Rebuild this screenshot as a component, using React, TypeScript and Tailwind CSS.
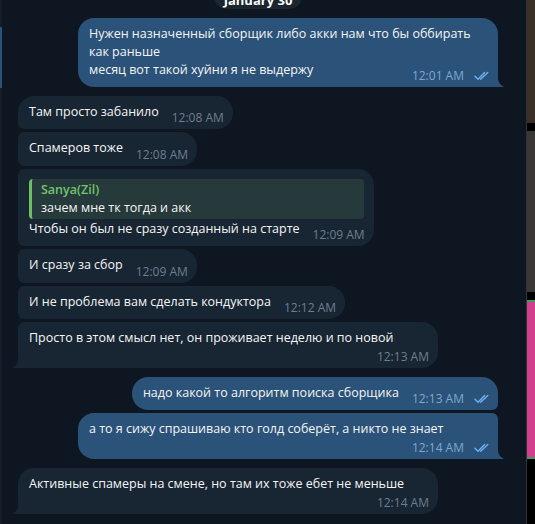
import React from "react";

type Corner = string;

function Checks() {
  return (
    <svg className="ml-[10px]" width="16" height="10" viewBox="0 0 16 10" fill="none">
      <path d="M1 5.2L4 8.2L10.6 1.6" stroke="#6db3f2" strokeWidth="1.4" strokeLinecap="round" strokeLinejoin="round" />
      <path d="M6.6 8.2L13.8 1.6" stroke="#6db3f2" strokeWidth="1.4" strokeLinecap="round" strokeLinejoin="round" />
    </svg>
  );
}

function Meta({ out, time }: { out?: boolean; time: string }) {
  return (
    <div className={`flex h-[16px] items-center whitespace-nowrap text-[12px] leading-[16px] ${out ? "text-[#7da8d3]" : "text-[#6d7f8f]"}`}>
      <span>{time}</span>
      {out && <Checks />}
    </div>
  );
}

function InTail() {
  return (
    <svg className="absolute bottom-0 left-[-6px]" width="8" height="14" viewBox="0 0 8 14">
      <path d="M8 0 L6.5 0 C6.5 8 4.5 12 0.5 13.4 C0.1 13.6 0.2 14 0.6 14 L8 14 Z" fill="#182533" />
    </svg>
  );
}

function OutTail() {
  return (
    <svg className="absolute bottom-0 right-[-6px]" width="8" height="14" viewBox="0 0 8 14">
      <path d="M0 0 L1.5 0 C1.5 8 3.5 12 7.5 13.4 C7.9 13.6 7.8 14 7.4 14 L0 14 Z" fill="#2b5278" />
    </svg>
  );
}

function Bubble({
  out,
  lines,
  time,
  wrapTime,
  wide,
  corners,
  tail,
  reply,
  mt,
}: {
  out?: boolean;
  lines: string[];
  time: string;
  wrapTime?: boolean;
  wide?: boolean;
  corners: Corner;
  tail?: boolean;
  reply?: { name: string; text: string };
  mt: string;
}) {
  const last = lines[lines.length - 1];
  return (
    <div className={`flex ${out ? "justify-end" : "justify-start"} ${mt}`}>
      <div
        className={`relative flex flex-col pl-[11px] pt-[7px] pb-[3px] ${out ? "bg-[#2b5278] pr-[8px]" : "bg-[#182533] pr-[9px]"} ${wide ? "w-[420px]" : ""} ${corners}`}
      >
        {reply && (
          <div className="mt-[3px] mb-[1px] mr-[1px] flex h-[40px] flex-col justify-center rounded-[4px] border-l-[3px] border-[#6cbf66] bg-[#263a3b] pl-[9px]">
            <div className="font-semibold leading-[18px] text-[#72c46c]">{reply.name}</div>
            <div className="leading-[18px]">{reply.text}</div>
          </div>
        )}
        {lines.slice(0, -1).map((l, i) => (
          <div key={i} className="whitespace-nowrap leading-[18px]">
            {l}
          </div>
        ))}
        {wrapTime ? (
          <>
            <div className="whitespace-nowrap leading-[18px]">{last}</div>
            <div className="mt-[2px] flex justify-end">
              <Meta out={out} time={time} />
            </div>
          </>
        ) : (
          <div className="flex items-end">
            <div className="mb-[5.5px] whitespace-nowrap leading-[18px]">{last}</div>
            <div className="ml-auto pl-[13px]">
              <Meta out={out} time={time} />
            </div>
          </div>
        )}
        {tail && (out ? <OutTail /> : <InTail />)}
      </div>
    </div>
  );
}

export default function App() {
  return (
    <div
      className="flex h-[524px] w-[535px] overflow-hidden bg-[#0e1621] text-[12.5px] text-[#f5f5f5]"
      style={{ fontFamily: '"Open Sans", "Noto Sans", sans-serif' }}
    >
      <div className="flex w-[2px] flex-col bg-[#151e28]">
        <div className="h-[27px]" />
        <div className="h-[61px] bg-[#2b5278]" />
      </div>
      <div className="flex flex-1 flex-col pl-[16px] pr-[28px]">
        <div className="mt-[-17px] flex justify-center">
          <div className="flex h-[26px] w-[88px] items-end justify-center rounded-[13px] bg-[#1b2631] pb-[0px] text-[13px] font-bold leading-[18px] text-white">
            January 30
          </div>
        </div>
        <Bubble
          out
          wide
          mt="mt-[8.5px]"
          corners="rounded-tl-[16px] rounded-tr-[16px] rounded-bl-[16px] rounded-br-none"
          tail
          lines={[
            "Нужен назначенный сборщик либо акки нам что бы оббирать",
            "как раньше",
            "месяц вот такой хуйни я не выдержу",
          ]}
          time="12:01 AM"
        />
        <Bubble
          mt="mt-[8.5px]"
          corners="rounded-tl-[16px] rounded-tr-[16px] rounded-br-[16px] rounded-bl-[6px]"
          lines={["Там просто забанило"]}
          time="12:08 AM"
        />
        <Bubble
          mt="mt-[3px]"
          corners="rounded-tl-[6px] rounded-tr-[16px] rounded-br-[16px] rounded-bl-[6px]"
          lines={["Спамеров тоже"]}
          time="12:08 AM"
        />
        <Bubble
          mt="mt-[3px]"
          corners="rounded-tl-[6px] rounded-tr-[16px] rounded-br-[16px] rounded-bl-[6px]"
          reply={{ name: "Sanya(Zil)", text: "зачем мне тк тогда и акк" }}
          lines={["Чтобы он был не сразу созданный на старте"]}
          time="12:09 AM"
        />
        <Bubble
          mt="mt-[3px]"
          corners="rounded-tl-[6px] rounded-tr-[16px] rounded-br-[16px] rounded-bl-[6px]"
          lines={["И сразу за сбор"]}
          time="12:09 AM"
        />
        <Bubble
          mt="mt-[3px]"
          corners="rounded-tl-[6px] rounded-tr-[16px] rounded-br-[16px] rounded-bl-[6px]"
          lines={["И не проблема вам сделать кондуктора"]}
          time="12:12 AM"
        />
        <Bubble
          mt="mt-[3px]"
          wide
          wrapTime
          tail
          corners="rounded-tl-[6px] rounded-tr-[16px] rounded-br-[16px] rounded-bl-none"
          lines={["Просто в этом смысл нет, он проживает неделю и по новой"]}
          time="12:13 AM"
        />
        <Bubble
          out
          mt="mt-[8.5px]"
          corners="rounded-tl-[16px] rounded-tr-[16px] rounded-bl-[16px] rounded-br-[6px]"
          lines={["надо какой то алгоритм поиска сборщика"]}
          time="12:13 AM"
        />
        <Bubble
          out
          wide
          wrapTime
          tail
          mt="mt-[3px]"
          corners="rounded-tl-[16px] rounded-tr-[6px] rounded-bl-[16px] rounded-br-none"
          lines={["а то я сижу спрашиваю кто голд соберёт, а никто не знает"]}
          time="12:14 AM"
        />
        <Bubble
          wide
          wrapTime
          tail
          mt="mt-[9px]"
          corners="rounded-tl-[16px] rounded-tr-[16px] rounded-br-[16px] rounded-bl-none"
          lines={["Активные спамеры на смене, но там их тоже ебет не меньше"]}
          time="12:14 AM"
        />
      </div>
      <div className="w-[1px] bg-[#2a323b]" />
      <div className="flex w-[8px] flex-col">
        <div className="h-[123px] bg-[#3a3027]" />
        <div className="h-[8px] bg-black" />
        <div className="h-[161px] bg-[#3b3737]" />
        <div className="h-[8px] bg-black" />
        <div className="h-[2px] bg-[#3f9a66]" />
        <div className="h-[155px] bg-[#d43f8d]" />
        <div className="h-[2px] bg-[#3f9a66]" />
        <div className="flex-1 bg-black" />
      </div>
    </div>
  );
}
